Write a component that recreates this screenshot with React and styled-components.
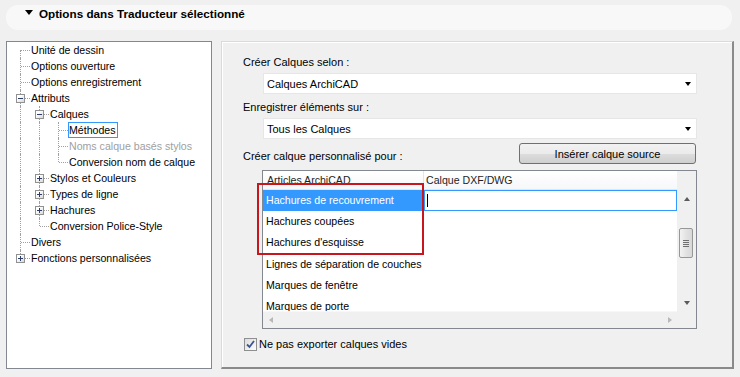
import React from 'react';
import styled, { createGlobalStyle } from 'styled-components';

const GlobalStyle = createGlobalStyle`
  html, body {
    margin: 0;
    padding: 0;
    background: #f0f0f0;
  }
  body {
    font-family: "Liberation Sans", Arial, sans-serif;
    font-size: 11px;
    color: #000;
  }
`;

const Screen = styled.div`
  width: 740px;
  height: 377px;
  box-sizing: border-box;
  padding: 5px 6px 0 6px;
  overflow: hidden;
`;

const SectionBar = styled.div`
  height: 25px;
  margin-right: 2px;
  box-sizing: border-box;
  padding: 2px 0 0 19px;
  border-radius: 12px;
  background: #f8f8f8;
  display: flex;
  align-items: flex-start;
`;

const Caret = styled.span`
  width: 0;
  height: 0;
  margin-top: 3px;
  border-left: 4.5px solid transparent;
  border-right: 4.5px solid transparent;
  border-top: 5px solid #000;
`;

const SectionTitle = styled.span`
  margin-left: 6px;
  font-size: 11.7px;
  font-weight: 700;
  line-height: 14px;
  white-space: nowrap;
`;

const Main = styled.div`
  display: flex;
  gap: 9px;
  margin-top: 11px;
  height: 328px;
`;

/* ---------- tree ---------- */

const TreeBox = styled.div`
  width: 206px;
  height: 328px;
  box-sizing: border-box;
  border: 1px solid #828790;
  background: #fff;
`;

const TreeRow = styled.div`
  display: flex;
  align-items: center;
  height: 16px;
  padding-left: 4px;
  white-space: nowrap;
  font-size: 10.6px;
`;

const Guide = styled.span`
  position: relative;
  flex: 0 0 19px;
  height: 16px;
  &::before {
    content: '';
    position: absolute;
    left: 9px;
    top: ${({ $kind }) => ($kind === 'start' ? '8px' : '0')};
    bottom: ${({ $kind }) => ($kind === 'elbow' ? '8px' : '0')};
    border-left: 1px dotted #a0a0a0;
  }
  &::after {
    content: '';
    display: ${({ $kind }) => ($kind === 'pipe' ? 'none' : 'block')};
    position: absolute;
    left: 10px;
    width: 9px;
    top: 8px;
    border-top: 1px dotted #a0a0a0;
  }
`;

const Expander = styled.span`
  position: absolute;
  z-index: 1;
  left: 5px;
  top: 4px;
  width: 9px;
  height: 9px;
  box-sizing: border-box;
  border: 1px solid #919191;
  background: linear-gradient(135deg, #ffffff 30%, #d8d8d8);
  display: flex;
  align-items: center;
  justify-content: center;
`;

const TreeLabel = styled.span`
  line-height: 14px;
  padding-right: 1px;
  border: 1px solid ${({ $focused }) => ($focused ? '#3399ff' : 'transparent')};
  color: ${({ $disabled }) => ($disabled ? '#a0a0a0' : '#000')};
`;

const TREE = [
  { label: 'Unité de dessin', guides: ['start'] },
  { label: 'Options ouverture', guides: ['tee'] },
  { label: 'Options enregistrement', guides: ['tee'] },
  { label: 'Attributs', guides: ['tee'], toggle: '-' },
  { label: 'Calques', guides: ['pipe', 'tee'], toggle: '-' },
  { label: 'Méthodes', guides: ['pipe', 'pipe', 'tee'], focused: true },
  { label: 'Noms calque basés stylos', guides: ['pipe', 'pipe', 'tee'], disabled: true },
  { label: 'Conversion nom de calque', guides: ['pipe', 'pipe', 'elbow'] },
  { label: 'Stylos et Couleurs', guides: ['pipe', 'tee'], toggle: '+' },
  { label: 'Types de ligne', guides: ['pipe', 'tee'], toggle: '+' },
  { label: 'Hachures', guides: ['pipe', 'tee'], toggle: '+' },
  { label: 'Conversion Police-Style', guides: ['pipe', 'elbow'] },
  { label: 'Divers', guides: ['tee'] },
  { label: 'Fonctions personnalisées', guides: ['elbow'], toggle: '+' },
];

const Sign = ({ plus }) => (
  <svg width="5" height="5" viewBox="0 0 5 5">
    <rect x="0" y="2" width="5" height="1" fill="#2b3f66" />
    {plus && <rect x="2" y="0" width="1" height="5" fill="#2b3f66" />}
  </svg>
);

const Tree = () => (
  <TreeBox>
    {TREE.map((item) => (
      <TreeRow key={item.label}>
        {item.guides.map((kind, i) => (
          <Guide key={i} $kind={kind}>
            {item.toggle && i === item.guides.length - 1 && (
              <Expander>
                <Sign plus={item.toggle === '+'} />
              </Expander>
            )}
          </Guide>
        ))}
        <TreeLabel $focused={item.focused} $disabled={item.disabled}>
          {item.label}
        </TreeLabel>
      </TreeRow>
    ))}
  </TreeBox>
);

/* ---------- right panel ---------- */

const Panel = styled.div`
  flex: 1;
  height: 328px;
  box-sizing: border-box;
  padding: 13px 35px 0 21px;
  border-top: 1px solid #dadada;
  border-left: 1px solid #dadada;
  border-right: 2px solid #8a8a8a;
  border-bottom: 2px solid #8a8a8a;
  box-shadow: inset 1px 1px 0 #fff;
  display: flex;
  flex-direction: column;
`;

const FieldLabel = styled.div`
  line-height: 14px;
  white-space: nowrap;
  margin-top: ${({ $gap = 0 }) => $gap}px;
`;

const Combo = styled.div`
  margin: 4px 0 0 20px;
  height: 21px;
  box-sizing: border-box;
  padding: 0 5px 0 3px;
  border: 1px solid #e6e6e6;
  background: #fff;
  display: flex;
  align-items: center;
  justify-content: space-between;
`;

const ComboArrow = styled.span`
  width: 0;
  height: 0;
  border-left: 3.5px solid transparent;
  border-right: 3.5px solid transparent;
  border-top: 4px solid #000;
`;

const ActionRow = styled.div`
  margin-top: 4px;
  display: flex;
  align-items: flex-start;
  justify-content: space-between;
`;

const Button = styled.button`
  width: 177px;
  height: 21px;
  margin-right: 1px;
  padding: 0;
  border: 1px solid #707070;
  border-radius: 3px;
  background: linear-gradient(#f2f2f2 0%, #ebebeb 50%, #dddddd 51%, #cfcfcf 100%);
  font-family: inherit;
  font-size: 11px;
  color: #000;
`;

const ListBox = styled.div`
  position: relative;
  margin: 6px 0 0 19px;
  height: 159px;
  box-sizing: border-box;
  border: 1px solid #828790;
  background: #fff;
  display: grid;
  grid-template-columns: 1fr 19px;
  grid-template-rows: 1fr 17px;
`;

const Table = styled.div`
  overflow: hidden;
  font-size: 10.6px;
`;

const HeaderRow = styled.div`
  display: flex;
  height: 19px;
  box-sizing: border-box;
  border-bottom: 1px solid #e5e5e5;
  background: linear-gradient(#ffffff, #f6f7f9);
`;

const HeaderCell = styled.div`
  width: ${({ $w }) => ($w ? `${$w}px` : 'auto')};
  flex: ${({ $w }) => ($w ? 'none' : '1')};
  box-sizing: border-box;
  padding-left: ${({ $pad }) => $pad}px;
  border-right: ${({ $w }) => ($w ? '1px solid #e5e5e5' : 'none')};
  line-height: 18px;
  white-space: nowrap;
  color: #1e1e1e;
`;

const Row = styled.div`
  display: flex;
  height: 21.2px;
`;

const Cell = styled.div`
  width: 161px;
  flex: none;
  box-sizing: border-box;
  padding-left: 3px;
  line-height: 21px;
  white-space: nowrap;
  background: ${({ $selected }) => ($selected ? '#3399ff' : 'transparent')};
  color: ${({ $selected }) => ($selected ? '#fff' : '#000')};
`;

const EditCell = styled.div`
  flex: 1;
  box-sizing: border-box;
  border: 1px solid #3399ff;
  padding-left: 2px;
  display: flex;
  align-items: center;
`;

const TextCaret = styled.span`
  width: 1px;
  height: 13px;
  background: #000;
`;

const VScroll = styled.div`
  background: #f0f0f0;
  display: flex;
  flex-direction: column;
`;

const ScrollBtn = styled.div`
  height: 17px;
  margin-top: ${({ $top = 0 }) => $top}px;
  display: flex;
  align-items: center;
  justify-content: center;
`;

const Track = styled.div`
  flex: 1;
`;

const Thumb = styled.div`
  width: 14px;
  height: 30px;
  margin: 21px 0 0 2px;
  box-sizing: border-box;
  border: 1px solid #979797;
  border-radius: 2px;
  background: linear-gradient(90deg, #f3f3f3, #e3e3e3 50%, #d8d8d8);
  display: flex;
  flex-direction: column;
  align-items: center;
  justify-content: center;
  gap: 1px;
`;

const Grip = styled.span`
  width: 6px;
  height: 1px;
  background: #6f6f6f;
`;

const Arrow = styled.span`
  width: 0;
  height: 0;
  border-style: solid;
  border-color: transparent;
  ${({ $dir, $color }) =>
    $dir === 'up'
      ? `border-width: 0 3.5px 4px 3.5px; border-bottom-color: ${$color};`
      : $dir === 'down'
      ? `border-width: 4px 3.5px 0 3.5px; border-top-color: ${$color};`
      : $dir === 'left'
      ? `border-width: 3.5px 4px 3.5px 0; border-right-color: ${$color};`
      : `border-width: 3.5px 0 3.5px 4px; border-left-color: ${$color};`}
`;

const HScroll = styled.div`
  background: #f0f0f0;
  border-top: 1px solid #f7f7f7;
  display: flex;
  align-items: center;
  justify-content: space-between;
  padding: 0 5px 0 6px;
`;

const Corner = styled.div`
  background: #f0f0f0;
`;

const Highlight = styled.div`
  position: absolute;
  left: -6px;
  top: 12px;
  width: 167px;
  height: 72px;
  box-sizing: border-box;
  border: 2px solid #c8161d;
  pointer-events: none;
`;

const CheckRow = styled.label`
  margin: 8px 0 0 1px;
  display: flex;
  align-items: center;
  gap: 2px;
  line-height: 14px;
`;

const CheckBox = styled.span`
  width: 13px;
  height: 13px;
  box-sizing: border-box;
  border: 1px solid #8e8f8f;
  background: linear-gradient(135deg, #dcdcdc, #fdfdfd);
  display: flex;
  align-items: center;
  justify-content: center;
`;

const ITEMS = [
  'Hachures de recouvrement',
  'Hachures coupées',
  "Hachures d'esquisse",
  'Lignes de séparation de couches',
  'Marques de fenêtre',
  'Marques de porte',
];

const LayerList = () => (
  <ListBox>
    <Table>
      <HeaderRow>
        <HeaderCell $w={161} $pad={4}>Articles ArchiCAD</HeaderCell>
        <HeaderCell $pad={2}>Calque DXF/DWG</HeaderCell>
      </HeaderRow>
      {ITEMS.map((name, i) => (
        <Row key={name}>
          <Cell $selected={i === 0}>{name}</Cell>
          {i === 0 && (
            <EditCell>
              <TextCaret />
            </EditCell>
          )}
        </Row>
      ))}
    </Table>
    <VScroll>
      <ScrollBtn $top={19}>
        <Arrow $dir="up" $color="#5a5a5a" />
      </ScrollBtn>
      <Track>
        <Thumb>
          <Grip />
          <Grip />
          <Grip />
          <Grip />
        </Thumb>
      </Track>
      <ScrollBtn>
        <Arrow $dir="down" $color="#5a5a5a" />
      </ScrollBtn>
    </VScroll>
    <HScroll>
      <Arrow $dir="left" $color="#b8b8b8" />
      <Arrow $dir="right" $color="#b8b8b8" />
    </HScroll>
    <Corner />
    <Highlight />
  </ListBox>
);

const App = () => (
  <Screen>
    <GlobalStyle />
    <SectionBar>
      <Caret />
      <SectionTitle>Options dans Traducteur sélectionné</SectionTitle>
    </SectionBar>
    <Main>
      <Tree />
      <Panel>
        <FieldLabel>Créer Calques selon :</FieldLabel>
        <Combo>
          Calques ArchiCAD
          <ComboArrow />
        </Combo>
        <FieldLabel $gap={6}>Enregistrer éléments sur :</FieldLabel>
        <Combo>
          Tous les Calques
          <ComboArrow />
        </Combo>
        <ActionRow>
          <FieldLabel $gap={6}>Créer calque personnalisé pour :</FieldLabel>
          <Button>Insérer calque source</Button>
        </ActionRow>
        <LayerList />
        <CheckRow>
          <CheckBox>
            <svg width="9" height="9" viewBox="0 0 9 9">
              <path d="M1 4.5 L3.5 7 L8 1" fill="none" stroke="#3b558f" strokeWidth="1.8" />
            </svg>
          </CheckBox>
          Ne pas exporter calques vides
        </CheckRow>
      </Panel>
    </Main>
  </Screen>
);

export default App;
